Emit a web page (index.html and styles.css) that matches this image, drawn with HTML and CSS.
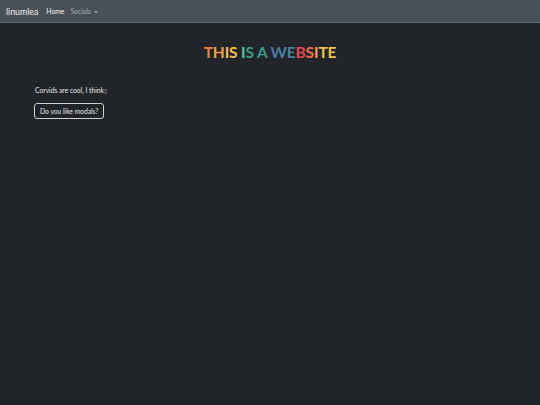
FILE: index.html
```html
<!DOCTYPE html>
<html>
<head>
<meta charset="utf-8">
<link rel="stylesheet" href="styles.css">
</head>
<body>
<nav class="navbar">
  <span class="brand">linumlea</span>
  <a class="nav-link active">Home</a>
  <a class="nav-link muted">Socials <span class="caret"></span></a>
</nav>
<main class="main">
  <h1 class="title"><span class="c1">T</span><span class="c2">H</span><span class="c3">IS</span> <span class="c4">I</span><span class="c5">S A</span> <span class="c6">WE</span><span class="c7">B</span><span class="c8">S</span><span class="c9">I</span><span class="c3">TE</span></h1>
  <section class="content">
    <p class="text">Corvids are cool, I think<span class="tofu">▯</span></p>
    <button class="btn">Do you like modals?</button>
  </section>
</main>
</body>
</html>
```
FILE: styles.css
```css
html, body {
  margin: 0;
  padding: 0;
  background: #212529;
  height: 100%;
}
body {
  font-family: Lato, "Liberation Sans", sans-serif;
  color: #e6e6e6;
}
.navbar {
  display: flex;
  align-items: center;
  height: 22px;
  padding: 0 6px;
  background: #495057;
  border-bottom: 1px solid #5a636b;
}
.brand {
  font-size: 8.8px;
  color: #f0f0f0;
  margin-right: 8px;
}
.nav-link {
  font-size: 6.8px;
  margin-right: 6px;
}
.nav-link.active { color: #f2f2f2; }
.nav-link.muted { color: #a5abb0; }
.caret {
  display: inline-block;
  width: 0;
  height: 0;
  border-left: 2px solid transparent;
  border-right: 2px solid transparent;
  border-top: 2px solid #a5abb0;
  vertical-align: middle;
  margin-left: 1px;
}
.main {
  padding-top: 19px;
}
.title {
  margin: 0;
  text-align: center;
  font-size: 15.5px;
  font-weight: 700;
  line-height: 20px;
  letter-spacing: -0.15px;
}
.c1 { color: #e8824c; }
.c2 { color: #eea04b; }
.c3 { color: #f1c24f; }
.c4 { color: #5cc59c; }
.c5 { color: #3a9f8c; }
.c6 { color: #4b7ca6; }
.c7 { color: #e54a52; }
.c8 { color: #ee7048; }
.c9 { color: #f29a48; }
.content {
  padding: 23px 0 0 35px;
}
.text {
  margin: 0 0 7px 0;
  font-size: 6.7px;
  line-height: 10px;
  color: #e8e8e8;
}
.tofu {
  font-family: "DejaVu Sans", sans-serif;
  font-size: 6px;
  color: #bbb;
}
.btn {
  display: block;
  margin-left: -1px;
  font-family: inherit;
  font-size: 6.7px;
  color: #e8e8e8;
  background: transparent;
  border: 1px solid #d0d0d0;
  border-radius: 3px;
  padding: 3px 5px;
  height: 16px;
}
```
